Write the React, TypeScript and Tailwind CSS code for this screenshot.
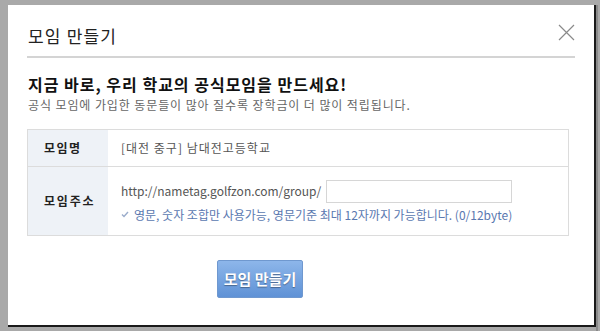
import React from "react";

const kr = { fontFamily: '"Noto Sans CJK KR", "Noto Sans", sans-serif' };

export default function App() {
  return (
    <div className="w-[600px] h-[331px] bg-[#a9a9a9] overflow-hidden flex flex-col" style={kr}>
      <div className="flex pt-[5px] pl-[8px]">
        <div className="w-[588px] h-[322px] bg-white border-r-2 border-b-2 border-[#1a1a1a] flex flex-col px-[19px] pt-[16px]">
          {/* header */}
          <div className="flex items-center justify-between h-[29px] border-b-2 border-[#d4d4d4] pb-[6px] box-content">
            <div className="text-[17px] text-[#222] leading-[22px] pl-[1px] tracking-[1.2px]">모임 만들기</div>
            <svg width="17" height="17" viewBox="0 0 17 17" className="mb-[6px]">
              <path d="M1 1 L16 16 M16 1 L1 16" stroke="#8a8a8a" strokeWidth="1.2" fill="none" />
            </svg>
          </div>
          {/* heading */}
          <div className="pt-[15px] pl-[1px]">
            <div className="text-[16px] font-bold text-[#111] leading-[22px] tracking-[1px]">
              지금 바로, 우리 학교의 공식모임을 만드세요!
            </div>
            <div className="text-[12px] text-[#666] leading-[16px] mt-[2px] tracking-[0.9px]">
              공식 모임에 가입한 동문들이 많아 질수록 장학금이 더 많이 적립됩니다.
            </div>
          </div>
          {/* table */}
          <div className="mt-[16px] w-[542px] border border-[#dcdcdc] text-[12px]">
            <div className="flex h-[37px] border-b border-[#dcdcdc]">
              <div className="w-[80px] bg-[#eef2f7] flex items-center pl-[16px] font-bold text-[#222] tracking-[1.5px]">모임명</div>
              <div className="flex-1 flex items-center pl-[13px] text-[#555] tracking-[1px]">[대전 중구] 남대전고등학교</div>
            </div>
            <div className="flex h-[68px]">
              <div className="w-[80px] bg-[#eef2f7] flex items-center pl-[16px] font-bold text-[#222] tracking-[1.8px]">모임주소</div>
              <div className="flex-1 flex flex-col justify-center pl-[13px] pt-[1px]">
                <div className="flex items-center">
                  <span className="text-[#555] tracking-[0px]">http://nametag.golfzon.com/group/</span>
                  <div className="ml-[5px] w-[186px] h-[23px] border border-[#d6d6d6] bg-white" />
                </div>
                <div className="flex items-center mt-[3px] text-[12px] text-[#5a78b0]">
                  <svg width="8" height="7" viewBox="0 0 8 7" className="mr-[5px]">
                    <path d="M1 3.5 L3 5.5 L7 1" stroke="#9aaccb" strokeWidth="1.4" fill="none" />
                  </svg>
                  <span>영문, 숫자 조합만 사용가능, 영문기준 최대 12자까지 가능합니다. (0/12byte)</span>
                </div>
              </div>
            </div>
          </div>
          {/* button */}
          <div className="pt-[24px] pl-[190px]">
            <button className="w-[86px] h-[38px] rounded-[2px] border border-[#6f98cf] bg-gradient-to-b from-[#8db6ea] to-[#5f92d6] text-white font-bold text-[15px] [text-shadow:0_1px_1px_rgba(0,0,0,0.35)]">
              모임 만들기
            </button>
          </div>
        </div>
        <div className="w-[2px] h-[331px] bg-[#8a8a8a]" />
      </div>
      <div className="flex h-[6px]">
        <div className="ml-[93px] w-[34px] h-[6px] bg-[#7c9a55] rounded-t-[3px]" />
      </div>
    </div>
  );
}
